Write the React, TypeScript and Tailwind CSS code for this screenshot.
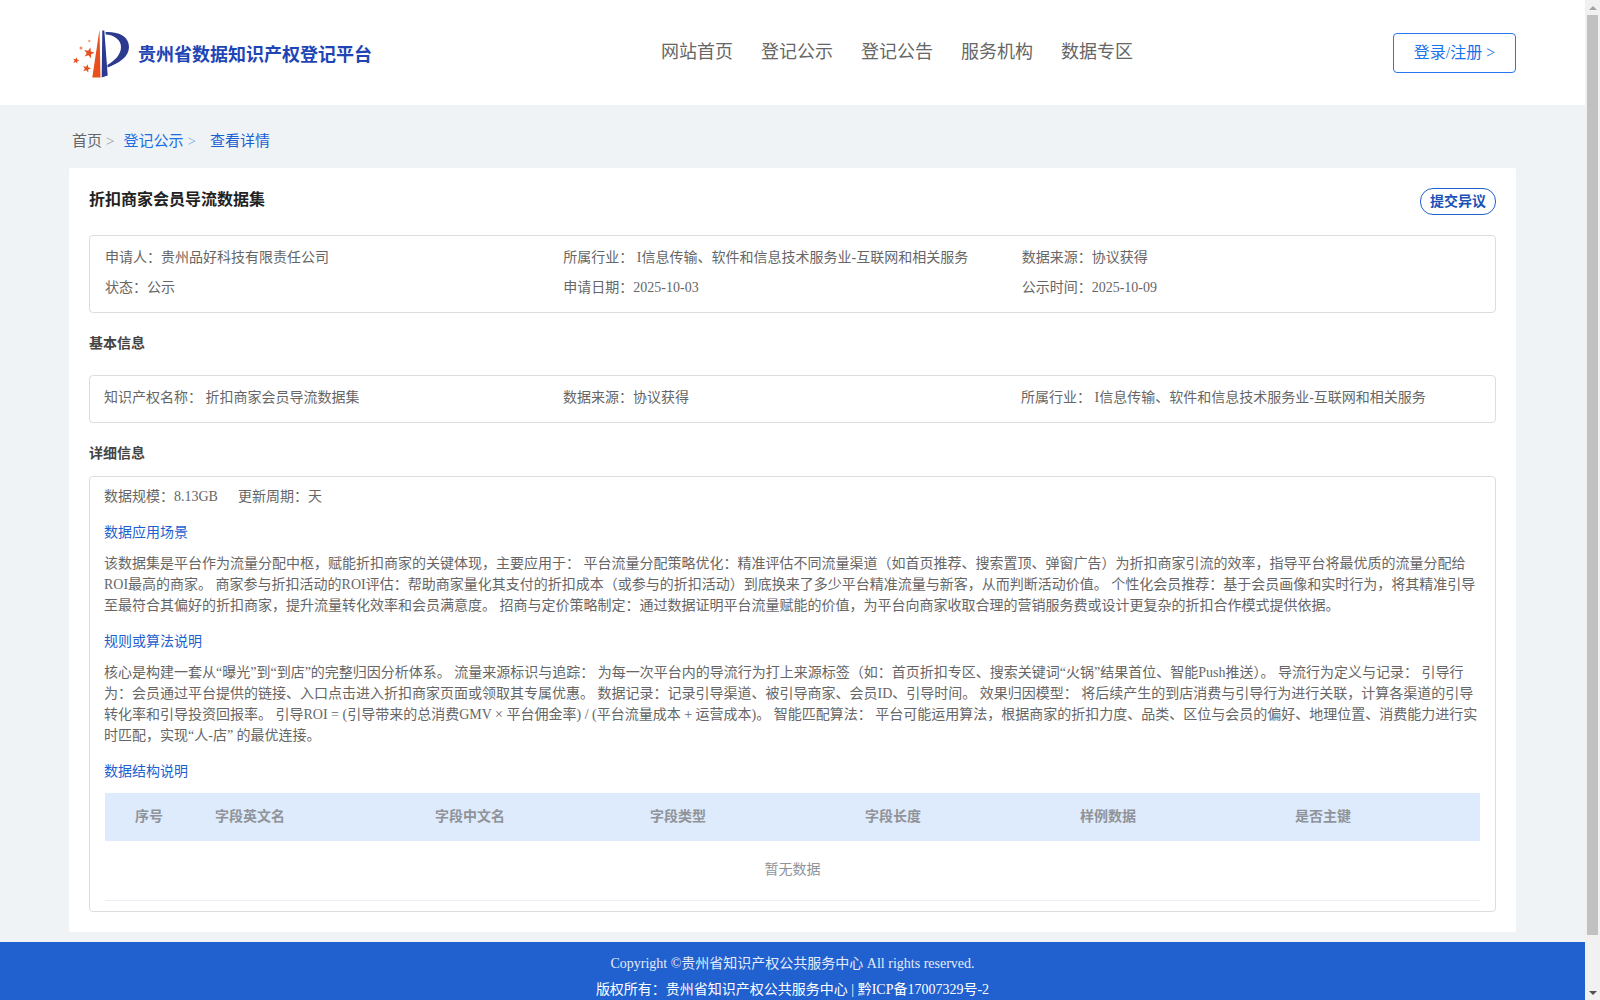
const navItems = ["网站首页", "登记公示", "登记公告", "服务机构", "数据专区"];

const tableCols = [
  { label: "序号", className: "w-[90px] pb-px pr-[2px] text-center" },
  { label: "字段英文名", className: "w-[220px] pb-px pl-5 text-left" },
  { label: "字段中文名", className: "w-[215px] pb-px pl-5 text-left" },
  { label: "字段类型", className: "w-[215px] pb-px pl-5 text-left" },
  { label: "字段长度", className: "w-[215px] pb-px pl-5 text-left" },
  { label: "样例数据", className: "w-[215px] pb-px pl-5 text-left" },
  { label: "是否主键", className: "pb-px pl-5 text-left" },
];

const starPoints = (cx: number, cy: number, r: number) => {
  const pts: string[] = [];
  for (let i = 0; i < 10; i++) {
    const radius = i % 2 === 0 ? r : r * 0.42;
    const angle = -Math.PI / 2 + 0.25 + (i * Math.PI) / 5;
    pts.push(`${cx + radius * Math.cos(angle)},${cy + radius * Math.sin(angle)}`);
  }
  return pts.join(" ");
};

const Logo = () => (
  <svg width="60" height="52" viewBox="0 0 60 52" className="shrink-0">
    <polygon points="27.5,2.5 28.5,50.5 20.3,50.5" fill="#e8501e" />
    <polygon points="30.3,3.5 32.3,3.5 35.7,48.5 29.7,50.5" fill="#2b3a8f" />
    <path d="M33.5 5 C47 4.5 57 9.5 57 20 C57 30 47 36 35.6 40.5 L35.4 38 C43 33.5 49 27.5 49 20 C49 12.5 42 8 33.8 7.5 Z" fill="#2b3a8f" />
    <polygon points={starPoints(17, 26, 5.6)} fill="#e8501e" />
    <polygon points={starPoints(4, 33.5, 3.4)} fill="#e8501e" />
    <polygon points={starPoints(14.7, 41.5, 4.4)} fill="#e8501e" />
    <circle cx="9" cy="21" r="1.5" fill="#ee8a60" />
    <circle cx="17.3" cy="14" r="1.2" fill="#f0a080" />
  </svg>
);

const Header = () => (
  <header className="flex h-[105px] shrink-0 items-center bg-white pl-[72px] pr-[69px]">
    <div className="flex w-[589px] items-center">
      <Logo />
      <span className="ml-[6px] mt-1 text-[18px] font-bold leading-6 text-[#1f45b5]">
        贵州省数据知识产权登记平台
      </span>
    </div>
    <nav className="flex gap-7 pb-0.5">
      {navItems.map((item) => (
        <a key={item} className="text-[18px] leading-6 text-[#666]">
          {item}
        </a>
      ))}
    </nav>
    <button className="ml-auto h-10 w-[123px] rounded border border-[#2a75ee] text-center text-base text-[#1a73e8]">
      登录/注册 &gt;
    </button>
  </header>
);

const Breadcrumb = () => (
  <div className="flex h-[63px] items-start pl-[3px] pt-[26px] text-[15px] leading-5">
    <span className="text-[#666]">首页</span>
    <span className="ml-1 text-[#999]">&gt;</span>
    <span className="ml-[9px] text-[#1a6fe0]">登记公示</span>
    <span className="ml-1 text-[#7aa8ee]">&gt;</span>
    <span className="ml-[14px] text-[#1a5fd0]">查看详情</span>
  </div>
);

const SectionTitle = ({ children, className }: { children: string; className: string }) => (
  <h3 className={`text-sm font-bold leading-5 text-[#444] ${className}`}>{children}</h3>
);

const BlueTitle = ({ children, className }: { children: string; className: string }) => (
  <h4 className={`text-sm leading-5 text-[#1e5fd0] ${className}`}>{children}</h4>
);

const DetailCard = () => (
  <div className="rounded-[2px] bg-white px-5 pb-5 pt-5">
    <div className="flex h-[47px] items-start justify-between">
      <h2 className="text-base font-bold leading-6 text-[#222]">折扣商家会员导流数据集</h2>
      <button className="h-[27px] w-[76px] rounded-[13px] border border-[#2160cf] text-sm font-bold leading-[25px] text-[#1a52b8]">
        提交异议
      </button>
    </div>

    <div className="h-[78px] rounded border border-[#ddd] px-[15px] pt-[7px] text-sm leading-[30px] text-[#666]">
      <div className="grid grid-cols-3">
        <div>申请人：贵州品好科技有限责任公司</div>
        <div>所属行业： I信息传输、软件和信息技术服务业-互联网和相关服务</div>
        <div>数据来源：协议获得</div>
        <div>状态：公示</div>
        <div>申请日期：2025-10-03</div>
        <div>公示时间：2025-10-09</div>
      </div>
    </div>

    <SectionTitle className="pb-[21px] pt-[21px]">基本信息</SectionTitle>

    <div className="h-[48px] rounded border border-[#ddd] pl-[14px] pr-[15px] text-sm leading-[44px] text-[#666]">
      <div className="grid grid-cols-[459px_458px_1fr]">
        <div>知识产权名称： 折扣商家会员导流数据集</div>
        <div>数据来源：协议获得</div>
        <div>所属行业： I信息传输、软件和信息技术服务业-互联网和相关服务</div>
      </div>
    </div>

    <SectionTitle className="pb-[12px] pt-[21px]">详细信息</SectionTitle>

    <div className="rounded border border-[#ddd] pb-[10px] pl-[14px] pr-[15px] pt-[10px] text-sm text-[#666]">
      <div className="leading-5">
        数据规模：8.13GB<span className="ml-5">更新周期：天</span>
      </div>

      <BlueTitle className="mt-4">数据应用场景</BlueTitle>
      <p className="mt-[10px] leading-[21px]">
        该数据集是平台作为流量分配中枢，赋能折扣商家的关键体现，主要应用于： 平台流量分配策略优化：精准评估不同流量渠道（如首页推荐、搜索置顶、弹窗广告）为折扣商家引流的效率，指导平台将最优质的流量分配给ROI最高的商家。 商家参与折扣活动的ROI评估：帮助商家量化其支付的折扣成本（或参与的折扣活动）到底换来了多少平台精准流量与新客，从而判断活动价值。 个性化会员推荐：基于会员画像和实时行为，将其精准引导至最符合其偏好的折扣商家，提升流量转化效率和会员满意度。 招商与定价策略制定：通过数据证明平台流量赋能的价值，为平台向商家收取合理的营销服务费或设计更复杂的折扣合作模式提供依据。
      </p>

      <BlueTitle className="mt-4">规则或算法说明</BlueTitle>
      <p className="mt-[10px] leading-[21px]">
        核心是构建一套从“曝光”到“到店”的完整归因分析体系。 流量来源标识与追踪： 为每一次平台内的导流行为打上来源标签（如：首页折扣专区、搜索关键词“火锅”结果首位、智能Push推送）。 导流行为定义与记录： 引导行为：会员通过平台提供的链接、入口点击进入折扣商家页面或领取其专属优惠。 数据记录：记录引导渠道、被引导商家、会员ID、引导时间。 效果归因模型： 将后续产生的到店消费与引导行为进行关联，计算各渠道的引导转化率和引导投资回报率。 引导ROI = (引导带来的总消费GMV × 平台佣金率) / (平台流量成本 + 运营成本)。 智能匹配算法： 平台可能运用算法，根据商家的折扣力度、品类、区位与会员的偏好、地理位置、消费能力进行实时匹配，实现“人-店” 的最优连接。
      </p>

      <BlueTitle className="mt-4">数据结构说明</BlueTitle>
      <table className="ml-px mt-[11px] w-[1375px] table-fixed border-collapse">
        <thead>
          <tr className="h-12 bg-[#deebfc]">
            {tableCols.map((col) => (
              <th key={col.label} className={`text-sm font-bold text-[#909399] ${col.className}`}>
                {col.label}
              </th>
            ))}
          </tr>
        </thead>
        <tbody>
          <tr className="h-[59px] border-b border-[#ebeef5]">
            <td colSpan={7} className="text-center text-sm text-[#909399]">
              暂无数据
            </td>
          </tr>
        </tbody>
      </table>
    </div>
  </div>
);

const Footer = () => (
  <footer className="mt-[10px] flex-1 bg-[#2160cf] pt-[9px] text-center text-sm leading-[26px] text-white">
    <div className="text-[#e4ecfa]">Copyright ©贵州省知识产权公共服务中心 All rights reserved.</div>
    <div>版权所有：贵州省知识产权公共服务中心 | 黔ICP备17007329号-2</div>
  </footer>
);

const Scrollbar = () => (
  <div className="flex w-[15px] shrink-0 flex-col items-center bg-[#f1f1f1]">
    <div className="flex h-[15px] items-center justify-center">
      <div className="h-0 w-0 border-x-[4px] border-b-[4px] border-x-transparent border-b-[#a3a3a3]" />
    </div>
    <div className="h-[920px] w-[11px] bg-[#c1c1c1]" />
    <div className="mt-auto flex h-[15px] items-center justify-center">
      <div className="h-0 w-0 border-x-[4px] border-t-[4px] border-x-transparent border-t-[#505050]" />
    </div>
  </div>
);

export default function App() {
  return (
    <div className="flex h-screen overflow-hidden bg-[#eff3f6] font-['Liberation_Serif','Noto_Sans_CJK_SC',serif]">
      <div className="flex min-w-0 flex-1 flex-col overflow-hidden">
        <Header />
        <main className="mx-auto w-[1447px] shrink-0">
          <Breadcrumb />
          <DetailCard />
        </main>
        <Footer />
      </div>
      <Scrollbar />
    </div>
  );
}
